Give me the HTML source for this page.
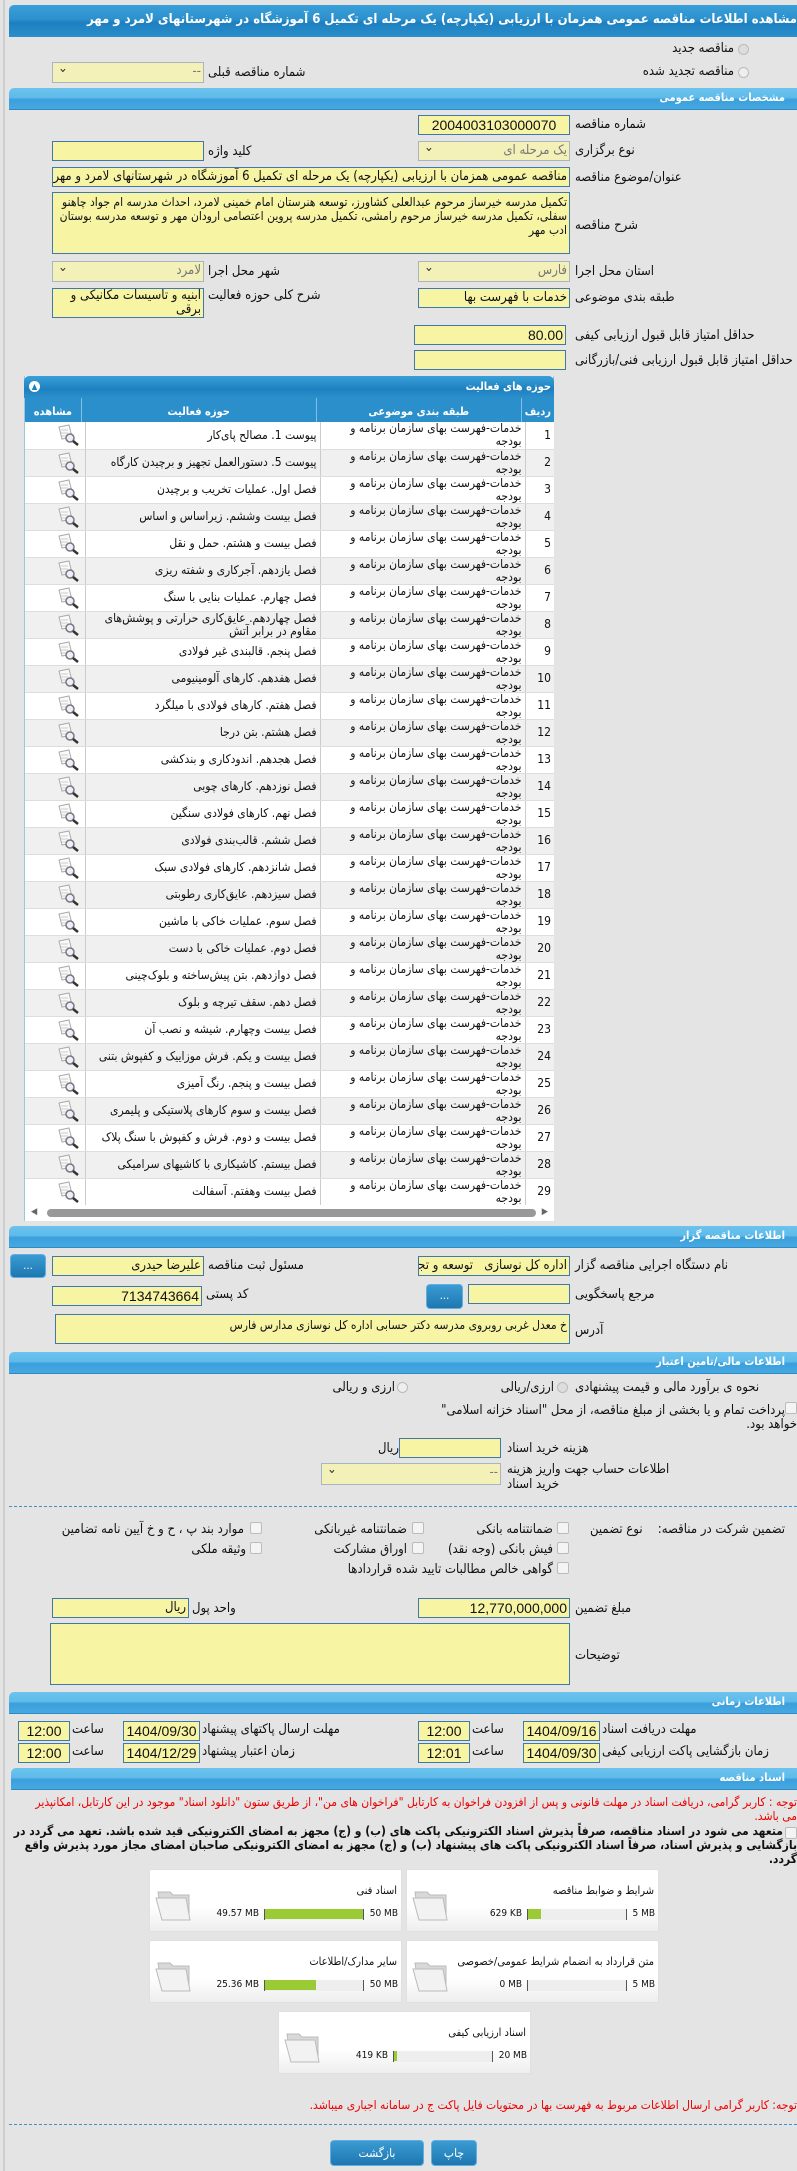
<!DOCTYPE html>
<html><head><meta charset="utf-8">
<style>
*{margin:0;padding:0;box-sizing:border-box}
body{width:797px;height:2171px;background:#e4e4e4;font-family:"DejaVu Sans Condensed","DejaVu Sans","Liberation Sans",sans-serif;font-size:12px;color:#111;position:relative;overflow:hidden;direction:rtl}
.a{position:absolute}
.vl{left:3px;top:0;width:2px;height:2171px;background:#cfcfcf}
.bar{position:absolute;left:9px;right:0;height:22px;background:linear-gradient(#6cc3ee 0%,#5fbbea 45%,#3a9fdc 55%,#47a8e0 100%);border-radius:5px 0 0 0;color:#fff;font-weight:bold;font-size:11px;line-height:20px;padding-right:12px;text-align:right;border-bottom:1px solid #2d8ac4}
.in{position:absolute;background:#f7f4a4;border:1px solid #3f78ad;height:20px;line-height:18px;padding:0 2px;white-space:nowrap;overflow:hidden;font-size:13px;text-align:right}
.sel{background:#f3f0b8;border-color:#a9b5bf;color:#777}
.sel:after{content:"⌄";position:absolute;left:5px;top:-3px;color:#333;font-size:13px}
.lb{position:absolute;white-space:nowrap;font-size:13px;line-height:18px}
.btn{position:absolute;background:linear-gradient(#3b9bd3,#1e77b0);border:1px solid #5fb0e0;border-radius:4px;color:#fff;font-size:11px;text-align:center;line-height:28px}
table{border-collapse:collapse}
td{border-right:1px solid #ccc;border-bottom:1px solid #ddd;font-size:12px;line-height:13px;vertical-align:middle;padding:0 3px;height:27px}
tr:nth-child(even) td{background:#f0f0f0}
tr:nth-child(odd) td{background:#fff}
.ic{width:24px;height:22px;display:block;margin-right:2px}
.rad{position:absolute;width:11px;height:11px;border-radius:50%;border:1px solid #bbb;background:#eee}
.cb{position:absolute;width:12px;height:12px;border:1px solid #bbb;background:#f4f4f4;border-radius:2px}
.fb{position:absolute;width:253px;height:63px;background:linear-gradient(#fff 60%,#eeeeee);border:1px solid #e0e0e0}
.fb .t{position:absolute;right:4px;top:14px;font-size:11px}
.fb .pb{position:absolute;top:39px;height:11px;width:100px;background:#eee;border-left:1px solid #555;border-right:1px solid #555}
.fb .g{position:absolute;right:0;top:0;height:10px;background:#9acb34}
.fb .s{position:absolute;top:38px;font-size:10px;direction:ltr}
.fd{position:absolute;left:4px;top:14px}
.n{font-family:"Liberation Sans",sans-serif;font-size:14px}
</style></head><body>
<div class="a vl"></div>

<div class="a" style="left:9px;right:0;top:5px;height:32px;background:linear-gradient(#3aa0d8 0%,#2b90cc 45%,#1d7fbf 55%,#2a8fcc 100%);border-radius:5px 0 0 0;overflow:hidden">
<div class="a" style="right:0;top:7px;white-space:nowrap;color:#fff;font-weight:bold;font-size:13px">مشاهده اطلاعات مناقصه عمومی همزمان با ارزیابی (یکپارچه) یک مرحله ای تکمیل 6 آموزشگاه در شهرستانهای لامرد و مهر</div></div>

<div class="rad" style="left:738px;top:44px;background:#ddd"></div>
<div class="lb" style="right:63px;top:40px">مناقصه جدید</div>
<div class="rad" style="left:738px;top:67px"></div>
<div class="lb" style="right:63px;top:63px">مناقصه تجدید شده</div>
<div class="in sel" style="left:52px;top:62px;width:152px;height:21px">--</div>
<div class="lb" style="left:208px;top:64px">شماره مناقصه قبلی</div>

<div class="bar" style="top:88px">مشخصات مناقصه عمومی</div>

<div class="lb" style="left:575px;top:116px">شماره مناقصه</div>
<div class="in n" style="left:418px;top:115px;width:152px;text-align:center">2004003103000070</div>
<div class="lb" style="left:575px;top:142px">نوع برگزاری</div>
<div class="in sel" style="left:418px;top:141px;width:152px">یک مرحله ای</div>
<div class="lb" style="left:208px;top:143px">کلید واژه</div>
<div class="in" style="left:52px;top:141px;width:152px"></div>
<div class="lb" style="left:575px;top:169px">عنوان/موضوع مناقصه</div>
<div class="in" style="left:52px;top:167px;width:518px">مناقصه عمومی همزمان با ارزیابی (یکپارچه) یک مرحله ای تکمیل 6 آموزشگاه در شهرستانهای لامرد و مهر</div>
<div class="lb" style="left:575px;top:217px">شرح مناقصه</div>
<div class="in" style="left:52px;top:192px;width:518px;height:62px;white-space:normal;line-height:14px;padding-top:2px;font-size:12px">تکمیل مدرسه خیرساز مرحوم عبدالعلی کشاورز، توسعه هنرستان امام خمینی لامرد، احداث مدرسه ام جواد چاهنو سفلی، تکمیل مدرسه خیرساز مرحوم رامشی، تکمیل مدرسه پروین اعتصامی ارودان مهر و توسعه مدرسه بوستان ادب مهر</div>
<div class="lb" style="left:575px;top:263px">استان محل اجرا</div>
<div class="in sel" style="left:418px;top:261px;width:152px;height:21px">فارس</div>
<div class="lb" style="left:208px;top:263px">شهر محل اجرا</div>
<div class="in sel" style="left:52px;top:261px;width:152px;height:21px">لامرد</div>
<div class="lb" style="left:575px;top:289px">طبقه بندی موضوعی</div>
<div class="in" style="left:418px;top:288px;width:152px">خدمات با فهرست بها</div>
<div class="lb" style="left:208px;top:287px">شرح کلی حوزه فعالیت</div>
<div class="in" style="left:52px;top:288px;width:152px;height:30px;white-space:normal;line-height:14px">ابنیه و تاسیسات مکانیکی و برقی</div>
<div class="lb" style="left:575px;top:327px">حداقل امتیاز قابل قبول ارزیابی کیفی</div>
<div class="in n" style="left:414px;top:325px;width:152px">80.00</div>
<div class="lb" style="left:575px;top:352px">حداقل امتیاز قابل قبول ارزیابی فنی/بازرگانی</div>
<div class="in" style="left:414px;top:350px;width:152px"></div>

<div class="a" style="left:24px;top:376px;width:530px;height:845px;background:#fff;border:1px solid #9cc5e0;border-top:none">
<div class="a" style="left:-1px;right:-1px;top:0;height:22px;background:linear-gradient(#3aa0d8,#1d80c0 60%,#2b90cc);border-radius:5px 5px 0 0;color:#fff;font-weight:bold;font-size:11px;line-height:22px;padding-right:3px">حوزه های فعالیت<div class="a" style="left:5px;top:5px;width:11px;height:11px;border-radius:50%;background:#fff;color:#1d80c0;font-size:8px;line-height:11px;text-align:center">▲</div></div>
<table class="a" style="left:0;top:22px;width:529px">
<tr style="height:24px"><td style="background:#2b8fcb;color:#fff;font-weight:bold;width:29px;border-right:none;font-size:11px">ردیف</td><td style="background:#2b8fcb;color:#fff;font-weight:bold;width:205px;text-align:center;font-size:11px;border-right:1px solid #7fc0e8">طبقه بندی موضوعی</td><td style="background:#2b8fcb;color:#fff;font-weight:bold;width:235px;text-align:center;font-size:11px;border-right:1px solid #7fc0e8">حوزه فعالیت</td><td style="background:#2b8fcb;color:#fff;font-weight:bold;text-align:center;font-size:11px;border-right:1px solid #7fc0e8">مشاهده</td></tr>
</table>
<div class="a" style="left:0;top:46px;width:529px;border-top:2px solid #6cc3ee"></div>
<table class="a" style="left:0;top:46px;width:529px" id="t">
<tbody>
<tr><td style="width:29px;border-right:none">1</td><td style="width:205px">خدمات-فهرست بهای سازمان برنامه و بودجه</td><td style="width:235px">پیوست 1. مصالح پای‌کار</td><td><svg class="ic" viewBox="0 0 24 22"><path d="M3 3l10-2 3 12-10 2z" fill="#fafafa" stroke="#aaa"/><path d="M5 6h7M5 9h7M6 12h5" stroke="#ccc"/><circle cx="14" cy="14" r="4" fill="#eef" stroke="#777" stroke-width="1.5"/><path d="M17 17l5 4" stroke="#333" stroke-width="2.5"/></svg></td></tr>
</tbody></table>
<div class="a" style="left:0;top:829px;width:529px;height:16px;background:#fff"><div class="a" style="left:22px;right:18px;top:4px;height:8px;border-radius:4px;background:#999"></div><div class="a" style="left:6px;top:2px;font-size:9px;color:#666">◀</div><div class="a" style="right:6px;top:2px;font-size:9px;color:#666">▶</div></div>
</div>

<div class="bar" style="top:1226px">اطلاعات مناقصه گزار</div>
<div class="lb" style="left:575px;top:1257px">نام دستگاه اجرایی مناقصه گزار</div>
<div class="in" style="left:418px;top:1256px;width:152px">اداره کل نوسازی &nbsp; توسعه و تجهیز مدارس</div>
<div class="lb" style="left:208px;top:1257px">مسئول ثبت مناقصه</div>
<div class="in" style="left:52px;top:1256px;width:152px">علیرضا حیدری</div>
<div class="btn" style="left:10px;top:1254px;width:36px;height:24px;line-height:22px">...</div>
<div class="lb" style="left:575px;top:1286px">مرجع پاسخگویی</div>
<div class="in" style="left:468px;top:1284px;width:102px"></div>
<div class="btn" style="left:426px;top:1284px;width:37px;height:25px;line-height:22px">...</div>
<div class="lb" style="left:206px;top:1286px">کد پستی</div>
<div class="in n" style="left:52px;top:1286px;width:150px">7134743664</div>
<div class="lb" style="left:575px;top:1322px">آدرس</div>
<div class="in" style="left:55px;top:1314px;width:515px;height:30px;line-height:20px;font-size:12px">خ معدل غربی روبروی مدرسه دکتر حسابی اداره کل نوسازی مدارس فارس</div>

<div class="bar" style="top:1352px">اطلاعات مالی/تامین اعتبار</div>
<div class="lb" style="left:575px;top:1379px">نحوه ی برآورد مالی و قیمت پیشنهادی</div>
<div class="rad" style="left:557px;top:1382px;background:#ddd"></div>
<div class="lb" style="right:243px;top:1379px">ارزی/ریالی</div>
<div class="rad" style="left:397px;top:1382px"></div>
<div class="lb" style="right:402px;top:1379px">ارزی و ریالی</div>
<div class="cb" style="left:785px;top:1402px"></div>
<div class="lb" style="right:12px;top:1402px">پرداخت تمام و یا بخشی از مبلغ مناقصه، از محل "اسناد خزانه اسلامی"</div>
<div class="lb" style="right:0;top:1416px">خواهد بود.</div>
<div class="lb" style="left:507px;top:1440px">هزینه خرید اسناد</div>
<div class="in" style="left:399px;top:1438px;width:102px"></div>
<div class="lb" style="left:378px;top:1440px">ریال</div>
<div class="lb" style="left:507px;top:1461px">اطلاعات حساب جهت واریز هزینه</div>
<div class="lb" style="left:507px;top:1476px">خرید اسناد</div>
<div class="in sel" style="left:321px;top:1463px;width:180px;height:22px">--</div>
<div class="a" style="left:9px;right:0;top:1506px;border-top:1px dashed #3d8fc4"></div>

<div class="lb" style="right:12px;top:1521px">تضمین شرکت در مناقصه:</div>
<div class="lb" style="left:590px;top:1521px">نوع تضمین</div>
<div class="cb" style="left:557px;top:1522px"></div><div class="lb" style="right:244px;top:1521px">ضمانتنامه بانکی</div>
<div class="cb" style="left:412px;top:1522px"></div><div class="lb" style="right:390px;top:1521px">ضمانتنامه غیربانکی</div>
<div class="cb" style="left:250px;top:1522px"></div><div class="lb" style="right:553px;top:1521px">موارد بند پ ، ح و خ آیین نامه تضامین</div>
<div class="cb" style="left:557px;top:1542px"></div><div class="lb" style="right:244px;top:1541px">فیش بانکی (وجه نقد)</div>
<div class="cb" style="left:412px;top:1542px"></div><div class="lb" style="right:390px;top:1541px">اوراق مشارکت</div>
<div class="cb" style="left:250px;top:1542px"></div><div class="lb" style="right:551px;top:1541px">وثیقه ملکی</div>
<div class="cb" style="left:557px;top:1562px"></div><div class="lb" style="right:244px;top:1561px">گواهی خالص مطالبات تایید شده قراردادها</div>

<div class="lb" style="left:575px;top:1600px">مبلغ تضمین</div>
<div class="in n" style="left:418px;top:1598px;width:152px">12,770,000,000</div>
<div class="lb" style="left:192px;top:1600px">واحد پول</div>
<div class="in" style="left:52px;top:1598px;width:137px">ریال</div>
<div class="lb" style="left:575px;top:1647px">توضیحات</div>
<div class="in" style="left:50px;top:1623px;width:520px;height:62px"></div>

<div class="bar" style="top:1692px">اطلاعات زمانی</div>
<div class="lb" style="left:602px;top:1721px">مهلت دریافت اسناد</div>
<div class="in n" style="left:523px;top:1721px;width:77px;text-align:center">1404/09/16</div>
<div class="lb" style="left:472px;top:1721px">ساعت</div>
<div class="in n" style="left:418px;top:1721px;width:52px;text-align:center">12:00</div>
<div class="lb" style="left:202px;top:1721px">مهلت ارسال پاکتهای پیشنهاد</div>
<div class="in n" style="left:123px;top:1721px;width:77px;text-align:center">1404/09/30</div>
<div class="lb" style="left:72px;top:1721px">ساعت</div>
<div class="in n" style="left:18px;top:1721px;width:52px;text-align:center">12:00</div>
<div class="lb" style="left:602px;top:1743px">زمان بازگشایی پاکت ارزیابی کیفی</div>
<div class="in n" style="left:523px;top:1743px;width:77px;text-align:center">1404/09/30</div>
<div class="lb" style="left:472px;top:1743px">ساعت</div>
<div class="in n" style="left:418px;top:1743px;width:52px;text-align:center">12:01</div>
<div class="lb" style="left:202px;top:1743px">زمان اعتبار پیشنهاد</div>
<div class="in n" style="left:123px;top:1743px;width:77px;text-align:center">1404/12/29</div>
<div class="lb" style="left:72px;top:1743px">ساعت</div>
<div class="in n" style="left:18px;top:1743px;width:52px;text-align:center">12:00</div>

<div class="bar" style="top:1768px;left:11px">اسناد مناقصه</div>
<div class="lb" style="right:0;top:1795px;color:#e00;font-size:12px;line-height:14px;width:770px;white-space:normal">توجه : کاربر گرامی، دریافت اسناد در مهلت قانونی و پس از افزودن فراخوان به کارتابل "فراخوان های من"، از طریق ستون "دانلود اسناد" موجود در این کارتابل، امکانپذیر می باشد.</div>
<div class="cb" style="left:785px;top:1827px"></div>
<div class="lb" style="right:0;top:1824px;font-weight:bold;font-size:12px;line-height:14px;width:786px;white-space:normal;text-indent:14px">متعهد می شود در اسناد مناقصه، صرفاً پذیرش اسناد الکترونیکی پاکت های (ب) و (ج) مجهز به امضای الکترونیکی قید شده باشد. تعهد می گردد در بازگشایی و پذیرش اسناد، صرفاً اسناد الکترونیکی پاکت های پیشنهاد (ب) و (ج) مجهز به امضای الکترونیکی صاحبان امضای مجاز مورد پذیرش واقع گردد.</div>

<div class="fb" style="left:406px;top:1869px"><div class="t">شرایط و ضوابط مناقصه</div><svg class="fd" width="40" height="38" viewBox="0 0 40 38"><path d="M4 8h12l3 3h16v24H8z" fill="#d8d8d8" stroke="#bbb"/><path d="M2 14h30l4 22H8z" fill="#f2f2f2" stroke="#bbb"/></svg><div class="s" style="right:3px">5 MB</div><div class="pb" style="left:120px"><div class="g" style="right:auto;left:0;width:13px"></div></div><div class="s" style="right:136px">629 KB</div></div>
<div class="fb" style="left:149px;top:1869px"><div class="t">اسناد فنی</div><svg class="fd" width="40" height="38" viewBox="0 0 40 38"><path d="M4 8h12l3 3h16v24H8z" fill="#d8d8d8" stroke="#bbb"/><path d="M2 14h30l4 22H8z" fill="#f2f2f2" stroke="#bbb"/></svg><div class="s" style="right:3px">50 MB</div><div class="pb" style="left:114px"><div class="g" style="width:98px"></div></div><div class="s" style="right:142px">49.57 MB</div></div>
<div class="fb" style="left:406px;top:1940px"><div class="t">متن قرارداد به انضمام شرایط عمومی/خصوصی</div><svg class="fd" width="40" height="38" viewBox="0 0 40 38"><path d="M4 8h12l3 3h16v24H8z" fill="#d8d8d8" stroke="#bbb"/><path d="M2 14h30l4 22H8z" fill="#f2f2f2" stroke="#bbb"/></svg><div class="s" style="right:3px">5 MB</div><div class="pb" style="left:120px"></div><div class="s" style="right:136px">0 MB</div></div>
<div class="fb" style="left:149px;top:1940px"><div class="t">سایر مدارک/اطلاعات</div><svg class="fd" width="40" height="38" viewBox="0 0 40 38"><path d="M4 8h12l3 3h16v24H8z" fill="#d8d8d8" stroke="#bbb"/><path d="M2 14h30l4 22H8z" fill="#f2f2f2" stroke="#bbb"/></svg><div class="s" style="right:3px">50 MB</div><div class="pb" style="left:114px"><div class="g" style="right:auto;left:0;width:51px"></div></div><div class="s" style="right:142px">25.36 MB</div></div>
<div class="fb" style="left:278px;top:2011px"><div class="t">اسناد ارزیابی کیفی</div><svg class="fd" width="40" height="38" viewBox="0 0 40 38"><path d="M4 8h12l3 3h16v24H8z" fill="#d8d8d8" stroke="#bbb"/><path d="M2 14h30l4 22H8z" fill="#f2f2f2" stroke="#bbb"/></svg><div class="s" style="right:3px">20 MB</div><div class="pb" style="left:114px"><div class="g" style="right:auto;left:0;width:3px"></div></div><div class="s" style="right:142px">419 KB</div></div>

<div class="lb" style="right:0;top:2096px;color:#e00;font-size:12px">توجه: کاربر گرامی ارسال اطلاعات مربوط به فهرست بها در محتویات فایل پاکت ج در سامانه اجباری میباشد.</div>
<div class="a" style="left:9px;right:0;top:2124px;border-top:1px dashed #3d8fc4"></div>
<div class="btn" style="left:330px;top:2140px;width:94px;height:26px;line-height:24px;font-size:12px">بازگشت</div>
<div class="btn" style="left:431px;top:2140px;width:46px;height:26px;line-height:24px;font-size:12px">چاپ</div>

<script>
var acts=["پیوست 1. مصالح پای‌کار","پیوست 5. دستورالعمل تجهیز و برچیدن کارگاه","فصل اول. عملیات تخریب و برچیدن","فصل بیست وششم. زیراساس و اساس","فصل بیست و هشتم. حمل و نقل","فصل یازدهم. آجرکاری و شفته ریزی","فصل چهارم. عملیات بنایی با سنگ","فصل چهاردهم. عایق‌کاری حرارتی و پوشش‌های مقاوم در برابر آتش","فصل پنجم. قالبندی غیر فولادی","فصل هفدهم. کارهای آلومینیومی","فصل هفتم. کارهای فولادی با میلگرد","فصل هشتم. بتن درجا","فصل هجدهم. اندودکاری و بندکشی","فصل نوزدهم. کارهای چوبی","فصل نهم. کارهای فولادی سنگین","فصل ششم. قالب‌بندی فولادی","فصل شانزدهم. کارهای فولادی سبک","فصل سیزدهم. عایق‌کاری رطوبتی","فصل سوم. عملیات خاکی با ماشین","فصل دوم. عملیات خاکی با دست","فصل دوازدهم. بتن پیش‌ساخته و بلوک‌چینی","فصل دهم. سقف تیرچه و بلوک","فصل بیست وچهارم. شیشه و نصب آن","فصل بیست و یکم. فرش موزاییک و کفپوش بتنی","فصل بیست و پنجم. رنگ آمیزی","فصل بیست و سوم کارهای پلاستیکی و پلیمری","فصل بیست و دوم. فرش و کفپوش با سنگ پلاک","فصل بیستم. کاشیکاری با کاشیهای سرامیکی","فصل بیست وهفتم. آسفالت"];
var tb=document.querySelector('#t tbody'),first=tb.rows[0],ic=first.cells[3].innerHTML,h='';
for(var i=0;i<29;i++){h+='<tr><td style="width:29px;border-right:none">'+(i+1)+'</td><td style="width:205px">خدمات-فهرست بهای سازمان برنامه و بودجه</td><td style="width:235px">'+acts[i]+'</td><td>'+ic+'</td></tr>';}
tb.innerHTML=h;
</script>
</body></html>
